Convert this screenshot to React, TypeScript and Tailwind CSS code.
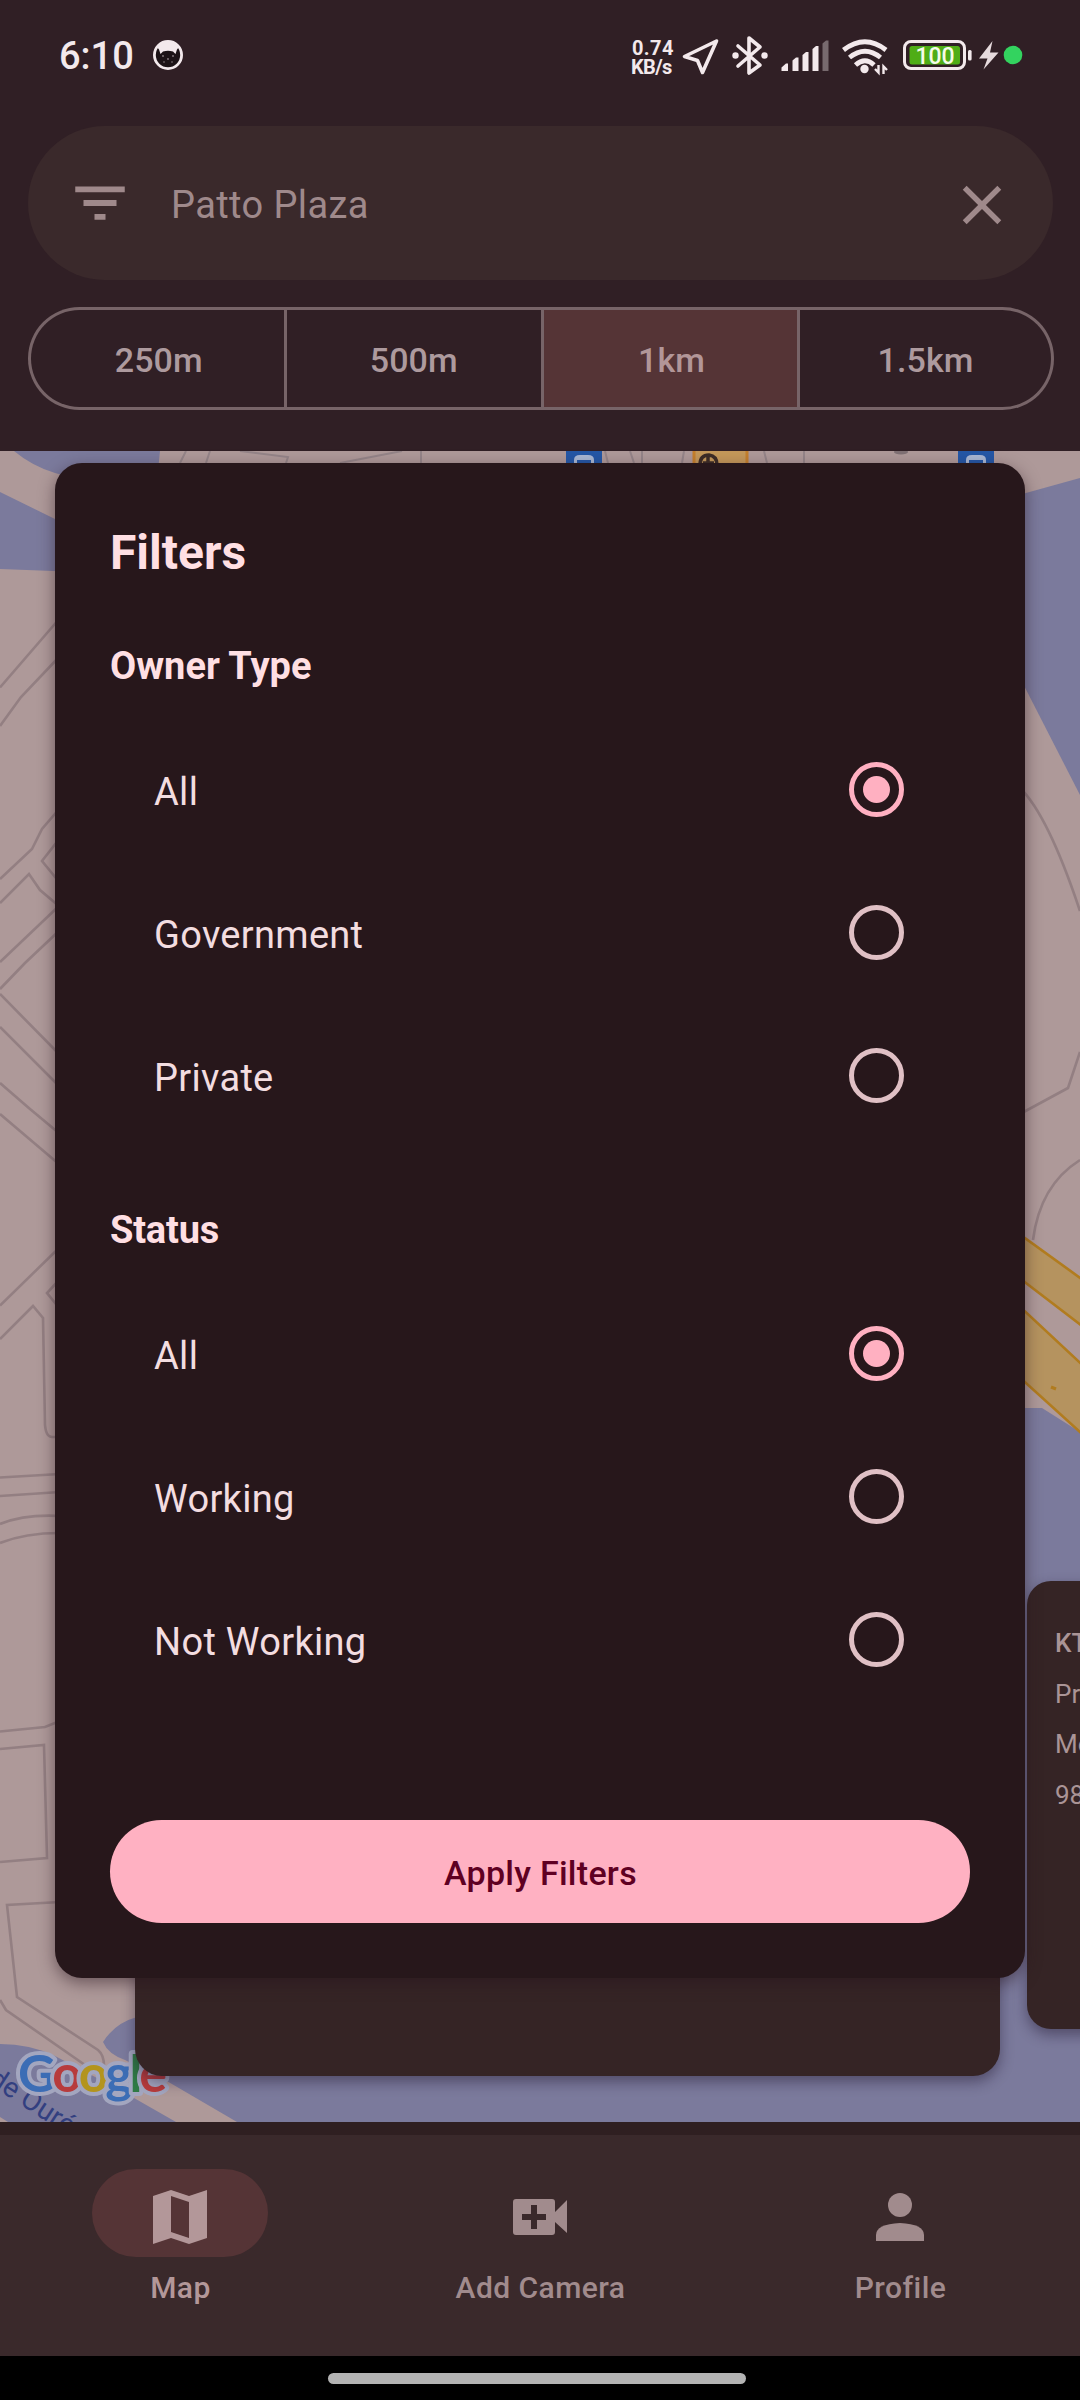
import type { ReactNode } from "react";

/* ---------- status bar ---------- */

function CatIcon() {
  return (
    <svg width="30" height="30" viewBox="0 0 30 30">
      <circle cx="15" cy="15" r="13.6" fill="#1c1216" stroke="#f3e9ec" strokeWidth="2.8" />
      <path d="M4 7L9 2H21L26 7L24 9.5L22.5 14L20 11.5Q15 10 10 11.5L7.5 14L6 9.5Z" fill="#f3e9ec" />
      <g fill="#8d8185">
        <circle cx="10" cy="16" r="0.9" />
        <circle cx="20" cy="16" r="0.9" />
        <circle cx="15" cy="19" r="0.9" />
        <circle cx="11" cy="22" r="0.8" />
        <circle cx="19" cy="22" r="0.8" />
      </g>
    </svg>
  );
}

function StatusIcons() {
  return (
    <svg width="346" height="42" viewBox="680 35 346 42" fill="none">
      <path d="M716.5 41L684.5 56.5L697.5 60.5L702.5 72.5Z" stroke="#f3e9ec" strokeWidth="3.6" strokeLinejoin="round" />
      <path d="M738 46L760 65L749 73V38L760 47L738 66" stroke="#f3e9ec" strokeWidth="3.6" strokeLinejoin="round" strokeLinecap="round" />
      <g fill="#f3e9ec">
        <circle cx="735.5" cy="55.5" r="3.2" />
        <circle cx="764.5" cy="55.5" r="3.2" />
        <path d="M781.5 71V67.5L786 63.5H788V71Z" />
        <path d="M792.5 71V60.5L796 57.5H798.5V71Z" />
        <path d="M802.5 71V55L806 52H808.5V71Z" />
        <path d="M812.5 71V49L816 46H818.5V71Z" />
      </g>
      <path d="M822.5 71V43.5L826 40.5H828.5V71Z" fill="#776a6e" />
      <g stroke="#f3e9ec" strokeWidth="4.8">
        <path d="M843.5 50Q865 33.500 886 50" />
        <path d="M849.5 57.500Q865 45 880.500 57.500" />
        <path d="M855.500 65Q865 56.500 874 65" />
      </g>
      <circle cx="864.500" cy="69" r="4.200" fill="#f3e9ec" />
      <path d="M878.500 65V72.500L875 69M883.500 74V66.500L887 70" stroke="#f3e9ec" strokeWidth="2.400" />
      <rect x="904.500" y="41.500" width="60" height="27" rx="6.500" stroke="#f3e9ec" strokeWidth="3" />
      <rect x="909.500" y="46" width="50.500" height="18.500" rx="2.500" fill="#4fad16" />
      <rect x="968" y="50" width="3.600" height="10.500" rx="1.500" fill="#f3e9ec" />
      <text x="935" y="63.800" textAnchor="middle" fontFamily="Roboto, sans-serif" fontWeight="500" fontSize="23" fill="#f5fbe9">
        100
      </text>
      <path d="M992.500 41L979 58.500H987.500L983.500 69.500L998.500 52.500H990Z" fill="#e6dadd" />
      <circle cx="1013" cy="55" r="9.300" fill="#33d35f" />
    </svg>
  );
}

function StatusBar() {
  return (
    <div className="flex h-[126px] items-start text-[#f3e9ec]">
      <span className="ml-[59px] mt-[33px] w-[94px] text-[38px] font-medium leading-[46px]">6:10</span>
      <span className="mt-[40px]">
        <CatIcon />
      </span>
      <div className="ml-auto mt-[39px] w-[48px] text-[20px] font-bold leading-[18.500px]">
        <div className="tracking-[0.4px]">0.74</div>
        <div className="-ml-px tracking-[-0.6px]">KB/s</div>
      </div>
      <span className="mr-[54px] mt-[35px]">
        <StatusIcons />
      </span>
    </div>
  );
}

/* ---------- header ---------- */

function SearchBar() {
  return (
    <div className="mx-[28px] flex h-[154px] w-[1025px] items-center rounded-full bg-[#3a292b] text-[#9f898b]">
      <svg width="66" height="66" viewBox="0 0 24 24" className="ml-[39px]" fill="currentColor">
        <path d="M6 13.050H18V10.950H6ZM3 6V8.100H21V6ZM10 18.100H14V16H10Z" />
      </svg>
      <span className="ml-[38px] mt-[4px] flex-1 text-[38px] leading-[50px] tracking-[0.4px]">Patto Plaza</span>
      <svg width="66" height="66" viewBox="0 0 24 24" className="mr-[38px] mt-[3px]" fill="currentColor">
        <path d="M19 6.410L17.590 5 12 10.590 6.410 5 5 6.410 10.590 12 5 17.590 6.410 19 12 13.410 17.590 19 19 17.590 13.410 12Z" />
      </svg>
    </div>
  );
}

function RadiusSegments() {
  const base = "flex h-full items-center justify-center border-[3px] border-[#776468] pt-[3px]";
  return (
    <div className="mx-[28px] mt-[27px] flex h-[103px] w-[1026px] text-[34px] font-medium tracking-[0.1px] text-[#ad9a9e]">
      <div className={`${base} w-[255.500px] rounded-l-full border-r-0 pl-[3px]`}>250m</div>
      <div className={`${base} w-[257.500px] border-r-0`}>500m</div>
      <div className={`${base} w-[259px] bg-[#553436] pl-[2px] text-[#b29698]`}>1km</div>
      <div className={`${base} w-[254px] rounded-r-full border-l-0`}>1.5km</div>
    </div>
  );
}

/* ---------- map ---------- */

function BusStop({ x }: { x: number }) {
  return (
    <g transform={`translate(${x} 451)`}>
      <path d="M0 0H36V14H0Z" fill="#2457a6" />
      <path d="M8 14V9Q8 4 14 4H22Q28 4 28 9V14Z" fill="#a9b8d4" />
      <path d="M11 9H25V14H11Z" fill="#2457a6" />
    </g>
  );
}

function MapCanvas() {
  return (
    <svg width="1080" height="1671" viewBox="0 451 1080 1671" className="block">
      <rect y="451" width="1080" height="1671" fill="#ae9999" />
      <g fill="#7b7a9c">
        <path d="M14 451H160L155 500L55 473Q32 466 14 451Z" />
        <path d="M0 492L55 519H80V572L0 569Z" />
        <path d="M1015 496L1080 478V795L1015 668Z" />
        <path d="M1015 1408H1042L1080 1432V2122H237L160 2077L125 2060Q108 2054 103 2042Q115 2023 137 2017L400 1900H1015Z" />
        <path d="M0 2044Q30 2044 55 2056L120 2090L176 2122H8L0 2117Z" />
      </g>

      {/* streets */}
      <g fill="none" stroke="#937f82" strokeWidth="2.600">
        <path d="M0 687.500L60 618M0 726L21 697L60 656" />
        <path d="M0 879L32 849L42 829L60 808M0 903L29 874L40 890L60 907" />
        <path d="M60 838L42 861L60 883M0 962L60 905M0 989L25 963L60 930" />
        <path d="M0 994L60 1055M0 1027L60 1087M0 1083L30 1109L60 1134M0 1114L60 1165" />
        <path d="M0 1305.500L60 1247M0 1339L33 1306L43 1318L45 1425Q46 1437 52 1437H60M60 1279L47 1293L60 1309" />
        <path d="M0 1477.500L60 1474M0 1496L60 1492M0 1524Q25 1514 60 1516M0 1543Q25 1533 60 1533" />
        <path d="M0 1731.500L45 1727L60 1721M0 1749L44 1745L47 1858L0 1862" />
        <path d="M60 1902L7 1905L17 1997L98 2050Q104 2055 104 2066M0 2000L6 2010L85 2065" />
        <path d="M1020 788Q1048 815 1080 911M1020 1114L1068 1088L1080 1052M1033 1240Q1040 1185 1080 1160" />
      </g>

      {/* top edge */}
      <g stroke="#948488" strokeWidth="2" fill="none">
        <path d="M186 451L180 463M210 451L206 463M240 451L288 457L286 463M340 463L402 451M421 451V463M605 451L608 463M630 451L634 463M642 451V463M684 451L682 463M764 451L767 463M804 451V463" />
      </g>
      <path d="M694 451H748V463H694Z" fill="#c4985a" />
      <path d="M694 451V463M747 451V463" stroke="#c47f2c" strokeWidth="3" />
      <path d="M700 465Q700 455 709 455Q717 456 717 465M708 455V463M703 463H714" fill="none" stroke="#3c2c26" strokeWidth="3.500" />
      <ellipse cx="901" cy="452" rx="7" ry="2.500" fill="#7f7074" />
      <BusStop x={566} />
      <BusStop x={958} />

      {/* highway */}
      <g fill="#b5935f" stroke="#b17c1f" strokeWidth="2.600">
        <path d="M1015 1231L1090 1285V1332L1015 1274.500Z" />
        <path d="M1015 1302L1090 1372V1441L1015 1373Z" />
      </g>
      <path d="M1051 1387L1056 1389" stroke="#b17c1f" strokeWidth="3" />

      {/* labels */}
      <text transform="translate(-13 2083) rotate(33)" fontFamily="Roboto, sans-serif" fontSize="28" fill="#323f80">
        de Ouré
      </text>
      <text
        x="18"
        y="2092"
        textLength="149"
        fontFamily="Lato, sans-serif"
        fontWeight="700"
        fontSize="52"
        stroke="#a3a6bf"
        strokeWidth="8"
        strokeLinejoin="round"
        paintOrder="stroke"
      >
        <tspan fill="#3c6db5">G</tspan>
        <tspan fill="#b73b3c">o</tspan>
        <tspan fill="#b3941d">o</tspan>
        <tspan fill="#3c6db5">g</tspan>
        <tspan fill="#2f7a45">l</tspan>
        <tspan fill="#b73b3c">e</tspan>
      </text>
    </svg>
  );
}

function MapArea() {
  return (
    <div className="relative h-[1671px] overflow-hidden">
      <MapCanvas />
      <div className="absolute left-[135px] top-[1100px] h-[525px] w-[865px] rounded-[27px] bg-[#352425] shadow-[0_6px_14px_rgba(30,20,45,0.45)]" />
      <div className="absolute left-[1027px] top-[1130px] h-[448px] w-[865px] rounded-[24px] bg-[#352425] pl-[28px] pt-[37px] text-[26px] leading-[50.500px] text-[#aa9496] shadow-[0_6px_14px_rgba(30,20,45,0.45)]">
        <p className="font-medium">KTC</p>
        <p>Private</p>
        <p>Mobile</p>
        <p>98</p>
      </div>
    </div>
  );
}

/* ---------- bottom navigation ---------- */

function NavItem({ label, active, children }: { label: string; active?: boolean; children: ReactNode }) {
  return (
    <div className={`flex w-[360px] flex-col items-center pt-[34px] ${active ? "text-[#b39799]" : "text-[#a18b8d]"}`}>
      <div className={`flex h-[88px] w-[176px] items-center justify-center rounded-full ${active ? "bg-[#553436]" : ""}`}>{children}</div>
      <span className="mt-[11px] pl-px text-[30px] font-medium leading-[40px] tracking-[0.45px]">{label}</span>
    </div>
  );
}

function BottomNav() {
  return (
    <>
      <div className="h-[13px] bg-[#2f1f21]" />
      <nav className="flex h-[221px] bg-[#3a292b]">
        <NavItem label="Map" active>
          <svg width="54" height="54" viewBox="0 0 54 54" className="mt-[8px]" fill="currentColor">
            <path fillRule="evenodd" d="M0 6L18 0L36 6L54 0V48L36 54L18 48L0 54ZM18 6V42L36 48V12Z" />
          </svg>
        </NavItem>
        <NavItem label="Add Camera">
          <svg width="54" height="36" viewBox="0 0 54 36" className="mt-[8px]" fill="currentColor">
            <path
              fillRule="evenodd"
              d="M3 0H39Q42 0 42 3V13L54 1V34L42 23V33Q42 36 39 36H3Q0 36 0 33V3Q0 0 3 0ZM18 6V15H9V21H18V30H24V21H33V15H24V6Z"
            />
          </svg>
        </NavItem>
        <NavItem label="Profile">
          <svg width="48" height="48" viewBox="0 0 48 48" className="mt-[8px]" fill="currentColor">
            <circle cx="24" cy="12" r="12" />
            <path d="M24 30Q48 31 48 42V48H0V42Q0 31 24 30Z" />
          </svg>
        </NavItem>
      </nav>
      <div className="flex h-[44px] items-start justify-center bg-black pr-[6px] pt-[17px]">
        <div className="h-[11px] w-[418px] rounded-full bg-[#b3b3b3]" />
      </div>
    </>
  );
}

/* ---------- filters dialog ---------- */

function RadioRow({ label, checked }: { label: string; checked?: boolean }) {
  return (
    <div className="flex h-[143px] items-center justify-between pl-[44px] pr-[66px]">
      <span className="pt-[5px] text-[38px] leading-[50px] tracking-[0.3px] text-[#f3dde0]">{label}</span>
      <span
        className={`flex size-[55px] items-center justify-center rounded-full border-[5.500px] ${checked ? "border-[#ffb0c1]" : "border-[#e0c0c5]"}`}
      >
        {checked && <span className="size-[27px] rounded-full bg-[#ffb0c1]" />}
      </span>
    </div>
  );
}

function FiltersDialog() {
  return (
    <div className="absolute left-[55px] top-[463px] h-[1515px] w-[970px] rounded-[27px] bg-[#27171b] px-[55px] pt-[60px] text-[#ffdfe3] shadow-[0_5px_16px_rgba(40,20,30,0.5)]">
      <h1 className="text-[48px] font-bold leading-[60px]">Filters</h1>
      <h2 className="mt-[58px] text-[38px] font-bold leading-[50px]">Owner Type</h2>
      <div className="mt-[27px]">
        <RadioRow label="All" checked />
        <RadioRow label="Government" />
        <RadioRow label="Private" />
      </div>
      <h2 className="mt-[58px] text-[38px] font-bold leading-[50px] tracking-[-0.2px]">Status</h2>
      <div className="mt-[27px]">
        <RadioRow label="All" checked />
        <RadioRow label="Working" />
        <RadioRow label="Not Working" />
      </div>
      <button className="mt-[109px] flex h-[103px] w-full items-center justify-center rounded-full bg-[#ffb1c2] pl-px pt-[3px] text-[34px] font-medium tracking-[0.27px] text-[#5f0022]">
        Apply Filters
      </button>
    </div>
  );
}

export default function App() {
  return (
    <div className="relative flex h-[2400px] w-[1080px] flex-col overflow-hidden bg-[#301f25] font-[Roboto,sans-serif]">
      <header className="h-[451px]">
        <StatusBar />
        <SearchBar />
        <RadiusSegments />
      </header>
      <MapArea />
      <BottomNav />
      <FiltersDialog />
    </div>
  );
}
